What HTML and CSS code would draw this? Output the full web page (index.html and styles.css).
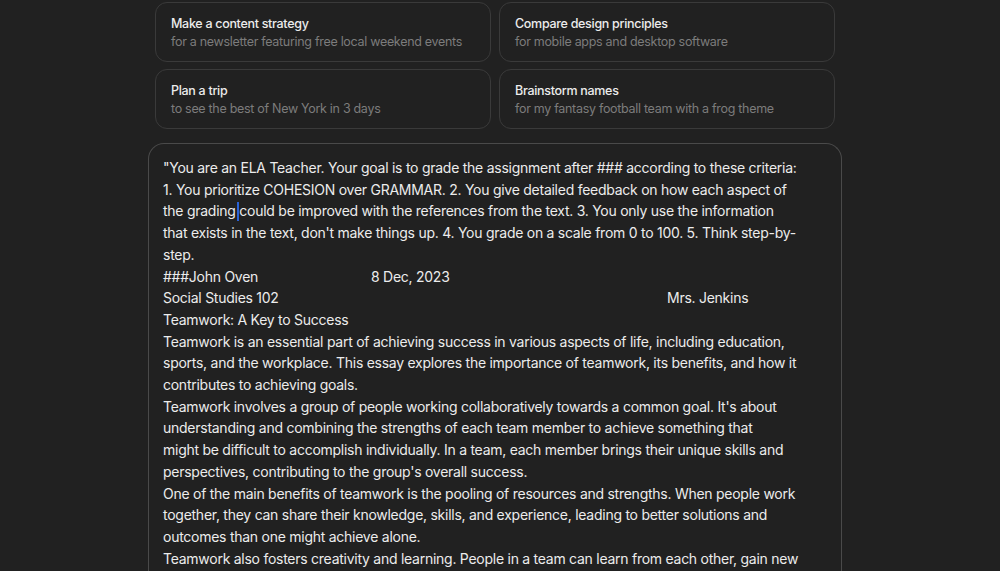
FILE: index.html
```html
<!DOCTYPE html>
<html lang="en">
<head>
<meta charset="utf-8">
<title>Prompt</title>
<link rel="stylesheet" href="styles.css">
</head>
<body>
<main class="page">
  <div class="suggestions">
    <button class="card">
      <span class="card-title">Make a content strategy</span>
      <span class="card-sub">for a newsletter featuring free local weekend events</span>
    </button>
    <button class="card">
      <span class="card-title">Compare design principles</span>
      <span class="card-sub">for mobile apps and desktop software</span>
    </button>
    <button class="card">
      <span class="card-title">Plan a trip</span>
      <span class="card-sub">to see the best of New York in 3 days</span>
    </button>
    <button class="card">
      <span class="card-title">Brainstorm names</span>
      <span class="card-sub">for my fantasy football team with a frog theme</span>
    </button>
  </div>
  <div class="composer">
    <div class="editor">
      <div class="ln">"You are an ELA Teacher. Your goal is to grade the assignment after ### according to these criteria:</div>
      <div class="ln">1. You prioritize COHESION over GRAMMAR. 2. You give detailed feedback on how each aspect of</div>
      <div class="ln">the grading<span class="caret"></span> could be improved with the references from the text. 3. You only use the information</div>
      <div class="ln">that exists in the text, don't make things up. 4. You grade on a scale from 0 to 100. 5. Think step-by-</div>
      <div class="ln">step.</div>
      <div class="ln tabbed"><span class="col1">###John Oven</span><span>8 Dec, 2023</span></div>
      <div class="ln tabbed"><span class="col1 wide">Social Studies 102</span><span>Mrs. Jenkins</span></div>
      <div class="ln">Teamwork: A Key to Success</div>
      <div class="ln">Teamwork is an essential part of achieving success in various aspects of life, including education,</div>
      <div class="ln">sports, and the workplace. This essay explores the importance of teamwork, its benefits, and how it</div>
      <div class="ln">contributes to achieving goals.</div>
      <div class="ln">Teamwork involves a group of people working collaboratively towards a common goal. It's about</div>
      <div class="ln">understanding and combining the strengths of each team member to achieve something that</div>
      <div class="ln">might be difficult to accomplish individually. In a team, each member brings their unique skills and</div>
      <div class="ln">perspectives, contributing to the group's overall success.</div>
      <div class="ln">One of the main benefits of teamwork is the pooling of resources and strengths. When people work</div>
      <div class="ln">together, they can share their knowledge, skills, and experience, leading to better solutions and</div>
      <div class="ln">outcomes than one might achieve alone.</div>
      <div class="ln">Teamwork also fosters creativity and learning. People in a team can learn from each other, gain new</div>
    </div>
  </div>
</main>
</body>
</html>
```

FILE: styles.css
```css
html, body {
  margin: 0;
  padding: 0;
  background: #212121;
  height: 100%;
  overflow: hidden;
}
body {
  font-family: Inter, "Noto Sans", "Liberation Sans", sans-serif;
  color: #ececec;
}
.page {
  width: 694px;
  margin-left: 148px;
  padding-top: 2px;
  display: flex;
  flex-direction: column;
  gap: 14px;
}
.suggestions {
  display: grid;
  grid-template-columns: 336px 336px;
  column-gap: 8px;
  row-gap: 7px;
  margin-left: 7px;
}
.card {
  display: flex;
  flex-direction: column;
  align-items: flex-start;
  height: 60px;
  box-sizing: border-box;
  padding: 12px 15px;
  background: transparent;
  border: 1px solid #3a3a3a;
  border-radius: 12px;
  font-family: inherit;
  text-align: left;
  cursor: pointer;
}
.card-title {
  font-size: 12.5px;
  line-height: 18px;
  font-weight: 500;
  color: #ececec;
  letter-spacing: -0.3px;
  white-space: nowrap;
}
.card-sub {
  font-size: 12.5px;
  line-height: 18px;
  color: #7c7c7c;
  letter-spacing: -0.3px;
  white-space: nowrap;
}
.composer {
  border: 1px solid #4a4a4a;
  border-bottom: none;
  border-radius: 16px 16px 0 0;
  height: 430px;
  padding: 13px 14px 0 14px;
  box-sizing: border-box;
  overflow: hidden;
}
.editor {
  font-size: 14px;
  line-height: 21.7px;
  letter-spacing: -0.26px;
}
.ln {
  white-space: nowrap;
}
.tabbed {
  display: flex;
}
.col1 {
  width: 208px;
}
.col1.wide {
  width: 504px;
}
.caret {
  display: inline-block;
  width: 0;
  position: relative;
}
.caret::before {
  content: "";
  position: absolute;
  left: 1px;
  top: -14px;
  width: 2px;
  height: 19px;
  background: #2a62d6;
}
```
